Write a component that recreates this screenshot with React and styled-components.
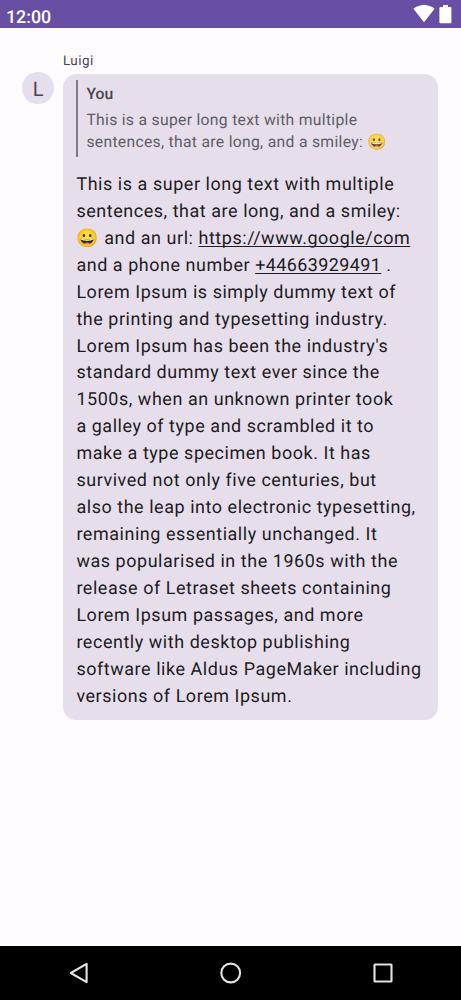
import React from "react";
import styled, { createGlobalStyle } from "styled-components";

const GlobalStyle = createGlobalStyle`
  * { box-sizing: border-box; }
  body {
    margin: 0;
    background: #fffbff;
    font-family: Roboto, "Liberation Sans", sans-serif;
    color: #1d1b1f;
    text-rendering: geometricPrecision;
  }
`;

const Screen = styled.div`
  display: flex;
  flex-direction: column;
  width: 461px;
  height: 1000px;
  overflow: hidden;
  background: #fffbff;
`;

const StatusBar = styled.header`
  display: flex;
  justify-content: space-between;
  flex: none;
  height: 28px;
  padding: 0 9px 0 6px;
  background: #6750a4;
  color: #fff;
`;

const Clock = styled.span`
  padding-top: 7px;
  font-size: 17.8px;
  font-weight: 500;
  line-height: 21px;
`;

const StatusIcons = styled.div`
  display: flex;
  gap: 4.5px;
  padding-top: 5px;
`;

const Conversation = styled.main`
  display: flex;
  flex: 1;
  gap: 9px;
  align-items: flex-start;
  padding: 23px 22.8px 0 22.4px;
`;

const Avatar = styled.div`
  flex: none;
  width: 31.5px;
  height: 31.5px;
  margin-top: 21.3px;
  border-radius: 50%;
  background: #e6dfeb;
  color: #49454e;
  font-size: 20px;
  line-height: 34px;
  text-align: center;
`;

const Message = styled.article`
  flex: 1;
  min-width: 0;
`;

const Author = styled.div`
  height: 22.5px;
  padding-top: 2px;
  color: #49454e;
  font-size: 13.46px;
  line-height: 18px;
  letter-spacing: 0.45px;
`;

const Bubble = styled.div`
  height: 646.4px;
  padding: 6.5px 13.5px 0 13px;
  border-radius: 13.5px;
  background: #e6dfeb;
`;

const Quote = styled.blockquote`
  height: 77px;
  margin: 0 0 15px;
  padding: 3px 0 0 8.5px;
  border-left: 2px solid #7b7783;
  color: #605c66;
  font-size: 15.7px;
  line-height: 22.4px;
  letter-spacing: 0.31px;
`;

const QuoteAuthor = styled.div`
  margin-bottom: 3.6px;
  color: #49454e;
  font-weight: 500;
  letter-spacing: 0.11px;
`;

const Line = styled.div`
  white-space: nowrap;
`;

const Body = styled.div`
  padding-left: 0.5px;
  font-size: 17.95px;
  line-height: 26.92px;
  letter-spacing: 0.56px;
`;

const Link = styled.a`
  color: inherit;
  letter-spacing: ${(p) => (p.$phone ? "0.42px" : "inherit")};
  text-decoration: underline;
  text-decoration-thickness: 1px;
  text-decoration-skip-ink: none;
  text-underline-offset: 2px;
`;

const Emoji = styled.span`
  font-family: "Noto Color Emoji", sans-serif;
  opacity: ${(p) => (p.$muted ? 0.8 : 1)};
`;

const NavBar = styled.nav`
  display: flex;
  flex: none;
  align-items: center;
  justify-content: space-between;
  height: 54px;
  padding: 0 65.5px;
  background: #000;
`;

const closing = [
  "Lorem Ipsum is simply dummy text of",
  "the printing and typesetting industry.",
  "Lorem Ipsum has been the industry's",
  "standard dummy text ever since the",
  "1500s, when an unknown printer took",
  "a galley of type and scrambled it to",
  "make a type specimen book. It has",
  "survived not only five centuries, but",
  "also the leap into electronic typesetting,",
  "remaining essentially unchanged. It",
  "was popularised in the 1960s with the",
  "release of Letraset sheets containing",
  "Lorem Ipsum passages, and more",
  "recently with desktop publishing",
  "software like Aldus PageMaker including",
  "versions of Lorem Ipsum.",
];

const NavIcon = ({ children }) => (
  <svg width="26" height="26" viewBox="0 0 26 26" fill="none" stroke="#e3e3e3" strokeWidth="2.1" strokeLinejoin="round">
    {children}
  </svg>
);

export default function App() {
  return (
    <>
      <GlobalStyle />
      <Screen>
        <StatusBar>
          <Clock>12:00</Clock>
          <StatusIcons>
            <svg width="22" height="19" viewBox="0 0 22 19" fill="#fff">
              <path d="M0.4 3.8C6.6-1.2 15.4-1.2 21.6 3.8L11 17.2Z" />
            </svg>
            <svg width="13" height="19" viewBox="0 0 13 19" fill="#fff">
              <path d="M4 0h5v2h2.4q1 0 1 1v14.2q0 1-1 1H1.4q-1 0-1-1V3q0-1 1-1H4Z" />
            </svg>
          </StatusIcons>
        </StatusBar>
        <Conversation>
          <Avatar>L</Avatar>
          <Message>
            <Author>Luigi</Author>
            <Bubble>
              <Quote>
                <QuoteAuthor>You</QuoteAuthor>
                <Line>This is a super long text with multiple</Line>
                <Line>
                  sentences, that are long, and a smiley: <Emoji $muted>😀</Emoji>
                </Line>
              </Quote>
              <Body>
                <Line>This is a super long text with multiple</Line>
                <Line>sentences, that are long, and a smiley:</Line>
                <Line>
                  <Emoji>😀</Emoji> and an url: <Link>https://www.google/com</Link>
                </Line>
                <Line>
                  and a phone number <Link $phone>+44663929491</Link> .
                </Line>
                {closing.map((text) => (
                  <Line key={text}>{text}</Line>
                ))}
              </Body>
            </Bubble>
          </Message>
        </Conversation>
        <NavBar>
          <NavIcon>
            <path d="M4.8 13L20.6 3.8V22.2Z" />
          </NavIcon>
          <NavIcon>
            <circle cx="12.7" cy="13" r="9.4" />
          </NavIcon>
          <NavIcon>
            <rect x="4.5" y="4.5" width="17" height="17" rx="0.6" />
          </NavIcon>
        </NavBar>
      </Screen>
    </>
  );
}
